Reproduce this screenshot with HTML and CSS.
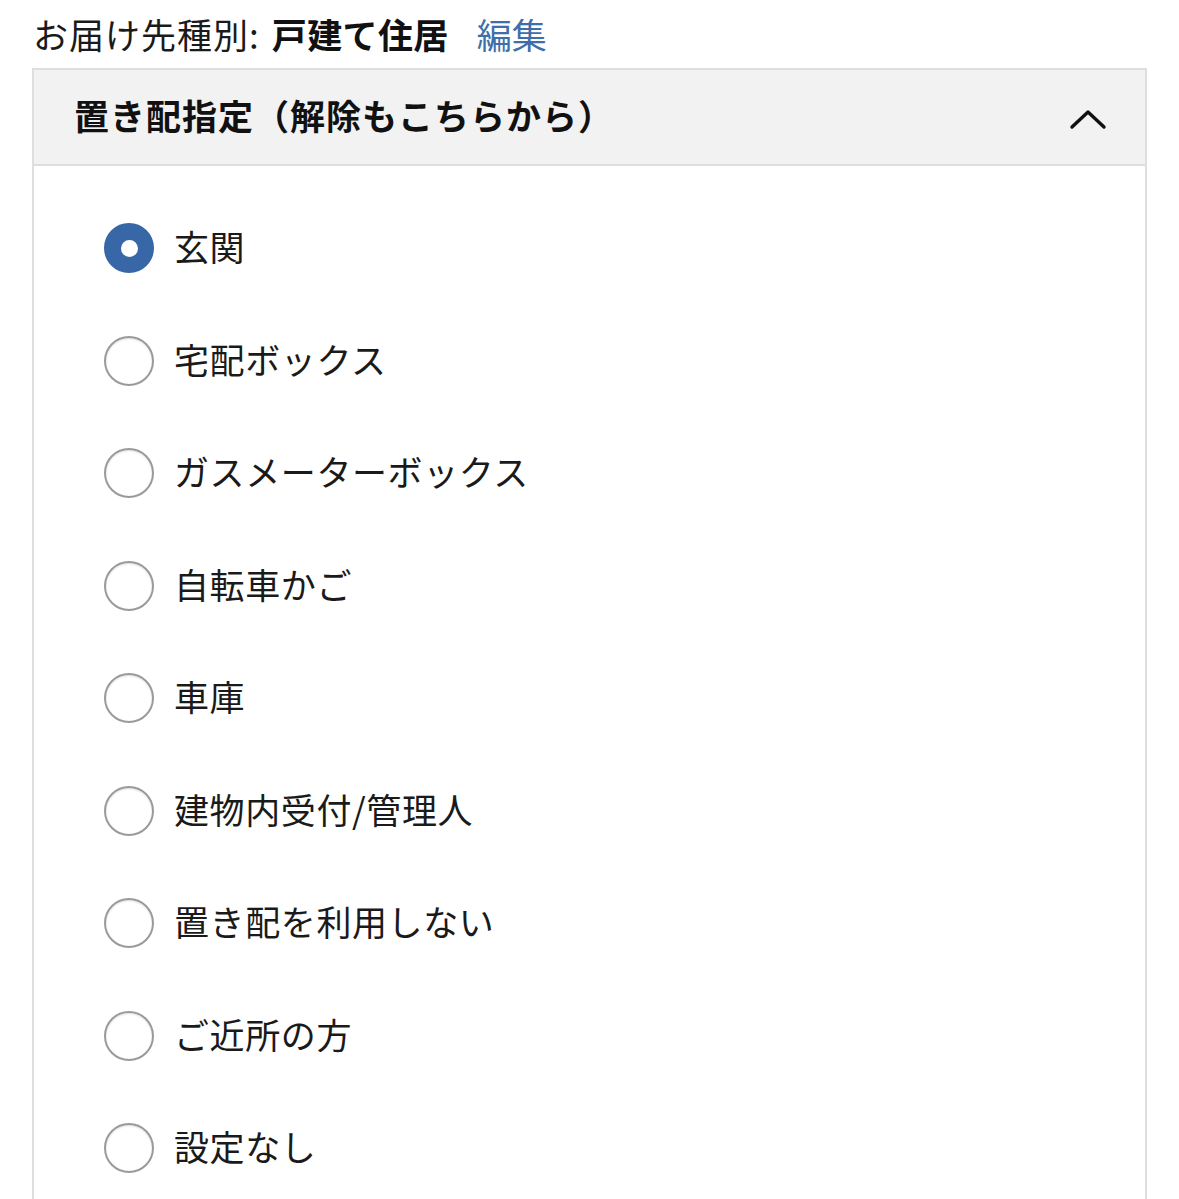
FILE: index.html
```html
<!DOCTYPE html>
<html lang="ja">
<head>
<meta charset="utf-8">
<link rel="stylesheet" href="styles.css">
</head>
<body>
<div class="dest">
  <span class="dest-label">お届け先種別:</span>
  <span class="dest-value">戸建て住居</span>
  <a class="dest-edit" href="#">編集</a>
</div>
<section class="panel">
  <div class="panel-head">
    <h2 class="panel-title">置き配指定（解除もこちらから）</h2>
    <svg class="chevron" width="38" height="24" viewBox="0 0 38 24"><path d="M3 20 L19 5 L35 20" fill="none" stroke="#111" stroke-width="3.4" stroke-linecap="round" stroke-linejoin="round"/></svg>
  </div>
  <ul class="options">
    <li class="option"><span class="radio checked"></span><span class="label">玄関</span></li>
    <li class="option"><span class="radio"></span><span class="label">宅配ボックス</span></li>
    <li class="option"><span class="radio"></span><span class="label">ガスメーターボックス</span></li>
    <li class="option"><span class="radio"></span><span class="label">自転車かご</span></li>
    <li class="option"><span class="radio"></span><span class="label">車庫</span></li>
    <li class="option"><span class="radio"></span><span class="label">建物内受付/管理人</span></li>
    <li class="option"><span class="radio"></span><span class="label">置き配を利用しない</span></li>
    <li class="option"><span class="radio"></span><span class="label">ご近所の方</span></li>
    <li class="option"><span class="radio"></span><span class="label">設定なし</span></li>
  </ul>
</section>
</body>
</html>
```

FILE: styles.css
```css
html, body {
  margin: 0;
  padding: 0;
  background: #fff;
}
body {
  font-family: "Noto Sans CJK JP", "Noto Sans", sans-serif;
  color: #111;
  overflow: hidden;
}
.dest {
  margin: 10px 0 10px 33px;
  height: 48px;
  line-height: 48px;
  font-size: 35px;
  display: flex;
  align-items: center;
  white-space: nowrap;
}
.dest-label {
  color: #1a1a1a;
  letter-spacing: 1px;
}
.dest-value {
  font-weight: 700;
  margin-left: 12px;
  letter-spacing: 0.4px;
}
.dest-edit {
  color: #3e6fa8;
  text-decoration: none;
  margin-left: 28px;
}
.panel {
  margin-left: 32px;
  width: 1111px;
  border: 2px solid #dedede;
  border-bottom: none;
  height: 1200px;
}
.panel-head {
  background: #f2f2f2;
  height: 94px;
  border-bottom: 2px solid #dedede;
  display: flex;
  align-items: center;
  justify-content: space-between;
  padding: 0 38px 0 40px;
}
.panel-title {
  margin: 0 0 6px 0;
  font-size: 35px;
  font-weight: 700;
  letter-spacing: 1px;
}
.chevron {
  display: block;
  margin-top: 4px;
}
.options {
  list-style: none;
  margin: 0;
  padding: 26px 0 0 70px;
}
.option {
  height: 112.5px;
  display: flex;
  align-items: center;
}
.radio {
  width: 50px;
  height: 50px;
  box-sizing: border-box;
  border-radius: 50%;
  border: 2px solid #9a9a9a;
  box-shadow: inset 0 1px 2px rgba(0,0,0,0.12);
  flex: none;
  display: flex;
  align-items: center;
  justify-content: center;
}
.radio.checked {
  background: #3767a6;
  border-color: #3767a6;
  box-shadow: none;
}
.radio.checked::after {
  content: "";
  width: 17px;
  height: 17px;
  border-radius: 50%;
  background: #fff;
}
.label {
  margin: 0 0 5px 20px;
  font-size: 35px;
  letter-spacing: 0.6px;
  color: #1a1a1a;
}
```
